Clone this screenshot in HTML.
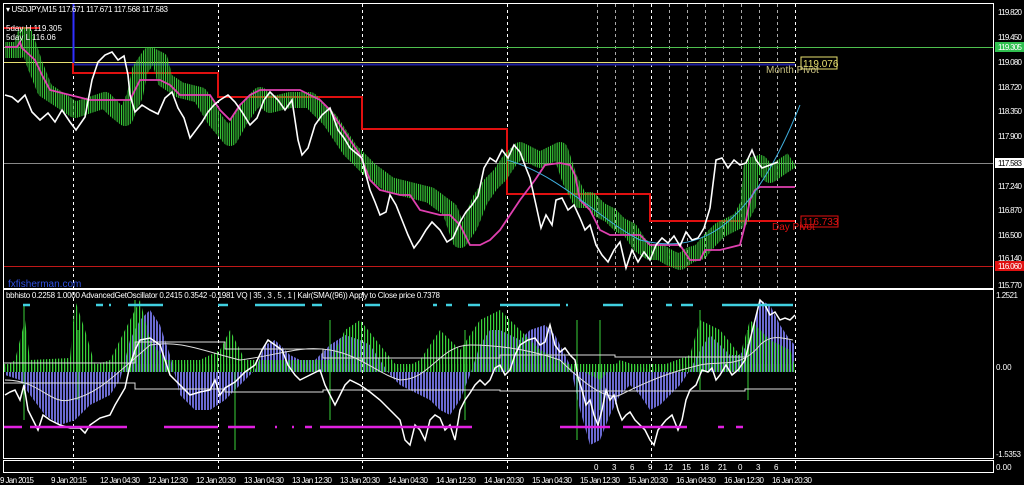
<!DOCTYPE html>
<html><head><meta charset="utf-8"><style>
html,body{margin:0;padding:0;background:#000;width:1024px;height:485px;overflow:hidden}
svg{display:block}
text{font-family:"Liberation Sans",sans-serif;font-size:8px;fill:#fff}
</style></head><body>
<svg width="1024" height="485" viewBox="0 0 1024 485">
<defs>
<pattern id="hb" width="3" height="4" patternUnits="userSpaceOnUse"><rect x="0" y="0" width="2" height="4" fill="#6a6ad0"/></pattern>
<pattern id="hg" width="3" height="4" patternUnits="userSpaceOnUse"><rect x="1" y="0" width="1.2" height="4" fill="#3ad23a"/></pattern>
<pattern id="vs" width="2.2" height="4" patternUnits="userSpaceOnUse"><rect x="0" y="0" width="1.1" height="4" fill="#fff"/></pattern>
<mask id="vm" maskUnits="userSpaceOnUse" x="0" y="0" width="1024" height="300"><rect x="0" y="0" width="1024" height="300" fill="url(#vs)"/></mask>
</defs>
<rect width="1024" height="485" fill="#000"/>
<rect x="3.5" y="3.5" width="990" height="285" fill="none" stroke="#fff"/>
<rect x="3.5" y="289.5" width="990" height="169" fill="none" stroke="#fff"/>
<rect x="3.5" y="460.5" width="990" height="12" fill="none" stroke="#fff"/>
<g stroke="#fff" stroke-dasharray="3,3" stroke-width="1">
<line x1="73.5" y1="4" x2="73.5" y2="472"/><line x1="218.5" y1="4" x2="218.5" y2="472"/>
<line x1="362.5" y1="4" x2="362.5" y2="472"/><line x1="507.5" y1="4" x2="507.5" y2="472"/>
<line x1="651.5" y1="4" x2="651.5" y2="472"/><line x1="795.5" y1="4" x2="795.5" y2="472"/>
</g>
<g stroke="#aaa" stroke-dasharray="3,3" stroke-width="1">
<line x1="597.5" y1="4" x2="597.5" y2="288"/><line x1="615.5" y1="4" x2="615.5" y2="288"/>
<line x1="633.5" y1="4" x2="633.5" y2="288"/><line x1="669.5" y1="4" x2="669.5" y2="288"/>
<line x1="687.5" y1="4" x2="687.5" y2="288"/><line x1="705.5" y1="4" x2="705.5" y2="288"/>
<line x1="723.5" y1="4" x2="723.5" y2="288"/><line x1="741.5" y1="4" x2="741.5" y2="288"/>
<line x1="759.5" y1="4" x2="759.5" y2="288"/><line x1="777.5" y1="4" x2="777.5" y2="288"/>
</g>
<line x1="4" y1="47.5" x2="993" y2="47.5" stroke="#4ec04e"/>
<line x1="4" y1="62.5" x2="795" y2="62.5" stroke="#e8e070"/>
<line x1="73" y1="64.5" x2="795" y2="64.5" stroke="#2020a0" stroke-width="2"/>
<line x1="4" y1="163.5" x2="993" y2="163.5" stroke="#888"/>
<line x1="4" y1="266.5" x2="993" y2="266.5" stroke="#c01818"/>
<line x1="73.5" y1="4" x2="73.5" y2="63" stroke="#3030ff" stroke-width="2"/>
<polyline fill="none" stroke="#e01010" stroke-width="2" points="4,28 40,28"/>
<polyline fill="none" stroke="#e01010" stroke-width="2" points="73,63 73,73 218,73 218,97 362,97 362,129 507,129 507,194 650,194 650,221 795,221"/>
<g mask="url(#vm)">
<polyline fill="none" stroke="#3ad23a" stroke-width="16" stroke-linejoin="round" points="5,50 20,50 25,35 35,65 45,90 60,100 75,110 90,105 105,100 115,110 125,118 135,95 140,70 150,55 160,60 165,80 180,90 200,95 215,120 230,138 240,120 250,105 260,95 270,105 290,100 310,100 330,120 350,150 370,170 390,185 410,190 430,195 450,210 460,240 470,225 480,200 490,185 500,175 510,160 520,150 540,160 560,150 570,180 580,200 590,200 600,210 610,215 620,225 630,230 640,245 650,252 660,252 670,258 680,262 690,255 700,252 710,240 720,230 730,225 740,220 748,205 752,165 760,163 770,175 780,168 792,160"/>
</g>
<polyline fill="none" stroke="#e040b0" stroke-width="1.8" points="5,47 17,47 20,42 22,48 35,60 42,75 50,90 70,95 90,100 110,100 130,100 140,80 160,80 170,85 180,95 210,95 220,110 230,120 240,105 250,95 260,90 280,90 300,90 310,95 320,100 330,110 340,125 350,140 360,155 370,180 380,190 400,195 410,195 420,210 440,215 450,215 460,225 470,245 480,245 490,240 500,230 510,215 520,200 535,180 545,165 560,163 570,165 575,175 580,200 590,210 600,230 610,235 620,235 640,235 650,245 660,245 680,245 690,260 700,260 705,250 720,250 740,245 745,225 750,200 755,190 760,187 795,187"/>
<path d="M507,160 C560,175 600,220 640,240 C700,255 750,230 800,105" fill="none" stroke="#40b0e0" stroke-width="1"/>
<polyline fill="none" stroke="#fff" stroke-width="1.6" points="5,95 12,97 18,102 25,95 32,112 40,120 48,113 55,122 62,110 70,122 76,130 85,117 92,80 98,62 105,55 112,52 118,60 124,56 128,75 130,95 135,112 142,105 150,110 158,114 165,98 172,92 178,108 184,118 190,138 196,130 202,122 208,112 214,105 220,100 228,95 235,102 242,112 250,125 257,118 264,100 270,92 278,100 285,110 292,100 298,140 302,155 308,148 315,125 322,115 330,108 338,130 344,138 350,148 356,153 362,158 366,175 370,190 375,202 380,215 386,212 390,195 396,205 402,220 408,235 414,248 420,240 426,230 432,222 440,230 447,242 453,238 460,222 466,212 472,205 478,196 484,168 490,158 496,162 502,150 508,158 514,145 520,152 526,168 530,178 536,205 541,228 546,215 552,225 556,200 562,198 568,210 574,205 580,218 585,230 590,225 596,245 602,255 608,262 614,250 620,242 626,268 632,250 638,262 644,252 650,260 656,245 662,238 668,243 674,236 680,246 686,232 692,240 698,238 704,228 710,208 716,160 722,158 728,168 734,160 740,165 746,163 752,150 756,160 762,168 770,165 778,162"/>
<rect x="801" y="57" width="36" height="12" fill="none" stroke="#e8e070"/>
<text x="803" y="67" style="fill:#e8e070;font-size:10px">119.076</text>
<text x="766" y="73" style="fill:#c8c080;font-size:10px">Month Pivot</text>
<rect x="801" y="216" width="37" height="11" fill="none" stroke="#e01010"/>
<text x="803" y="225" style="fill:#e01010;font-size:10px">116.733</text>
<text x="772" y="230" style="fill:#e01010;font-size:10px">Day Pivot</text>
<text x="6" y="12" textLength="162">▾ USDJPY,M15  117.671 117.671 117.568 117.583</text>
<text x="6" y="31">5day H 119.305</text>
<text x="6" y="40">5day L 116.06</text>
<text x="8" y="287" style="fill:#3050e0;font-size:10px">fxfisherman.com</text>
<path fill="url(#hb)" d="M5,367 L5,375 20,380 30,395 45,415 60,425 75,420 90,405 110,395 120,380 130,340 140,320 150,310 160,325 170,355 180,395 195,410 210,410 225,400 240,385 255,370 265,345 275,340 290,355 300,360 315,360 330,345 345,335 360,340 370,345 380,360 390,375 400,385 410,390 420,395 430,400 440,410 450,415 460,400 470,375 480,345 490,330 500,330 510,335 520,340 530,330 545,325 555,335 570,365 580,410 590,445 600,440 610,415 620,395 630,385 640,395 650,410 660,405 670,395 680,385 690,370 700,350 710,335 720,345 730,355 740,355 750,340 760,300 770,305 780,325 790,340 795,345 795,372 5,372Z"/>
<rect x="4" y="364" width="790" height="8" fill="url(#hg)"/>
<path fill="url(#hg)" d="M5,367 L15,360 25,320 30,360 70,358 75,300 85,330 95,365 110,360 130,320 140,300 150,340 165,360 200,360 220,350 230,330 245,360 330,360 345,330 360,320 400,370 420,360 440,330 460,350 480,320 500,310 520,330 540,350 560,360 600,380 620,360 650,370 690,355 700,320 720,330 740,355 750,320 760,330 770,340 790,350 795,367 795,372 5,372Z"/>
<g stroke="#3ad23a" stroke-width="1">
<line x1="24" y1="305" x2="24" y2="420"/><line x1="78" y1="330" x2="78" y2="400"/><line x1="135" y1="300" x2="135" y2="360"/><line x1="235" y1="372" x2="235" y2="450"/><line x1="330" y1="320" x2="330" y2="420"/><line x1="465" y1="330" x2="465" y2="420"/><line x1="577" y1="320" x2="577" y2="440"/><line x1="600" y1="320" x2="600" y2="410"/><line x1="700" y1="310" x2="700" y2="390"/><line x1="748" y1="330" x2="748" y2="400"/>
</g>
<polyline fill="none" stroke="#ddd" stroke-width="1" points="4,363 135,363 135,342 225,342 225,349 323,349 323,358 500,358 500,355 615,355 615,357 745,357"/>
<polyline fill="none" stroke="#ddd" stroke-width="1" points="4,383 135,383 135,389 225,389 225,392 323,392 323,390 500,390 500,391 745,391 745,389 793,389"/>
<path fill="none" stroke="#ddd" stroke-width="1" d="M5,380 C40,380 50,405 70,400 C95,395 110,380 150,345 C180,340 200,350 240,360 C280,355 300,345 330,350 C360,355 380,375 400,380 C430,380 440,345 470,345 C500,345 530,350 560,360 C590,390 610,400 620,395 C660,375 680,370 700,365 C720,360 740,370 760,345 C770,335 780,337 793,340"/>
<polyline fill="none" stroke="#fff" stroke-width="1.5" points="5,395 10,392 15,390 20,400 24,385 28,410 33,420 38,430 43,415 50,420 60,425 70,428 80,428 85,433 90,425 100,418 110,415 115,405 125,388 130,365 135,350 140,340 150,338 160,345 165,360 170,375 175,380 180,385 190,395 200,392 210,390 215,380 220,395 225,388 235,382 245,372 255,365 262,350 268,340 275,345 282,350 288,365 295,375 300,380 310,375 320,370 325,385 330,395 335,405 340,395 345,385 350,380 360,385 370,392 380,400 390,410 400,420 405,440 410,445 415,425 420,430 425,440 430,420 435,415 440,418 445,430 450,425 455,440 460,410 465,400 470,393 475,385 480,380 485,385 490,380 495,368 500,365 505,375 510,370 515,355 520,345 528,340 535,338 540,345 545,342 550,325 555,345 560,352 565,348 570,355 575,360 578,378 582,390 586,405 590,400 594,415 598,425 602,410 606,390 610,400 614,395 618,410 622,420 626,415 630,412 635,420 640,425 645,430 650,440 654,445 658,430 662,425 666,420 672,415 678,430 682,420 686,400 690,390 696,385 702,370 708,372 712,368 716,380 720,375 726,365 732,375 738,370 745,360 750,340 755,320 760,300 765,305 770,315 775,312 780,320 785,318 790,320 795,315"/>
<g stroke="#40d0e0" stroke-width="2.5">
<line x1="23" y1="305" x2="30" y2="305"/><line x1="96" y1="305" x2="103" y2="305"/><line x1="109" y1="305" x2="111" y2="305"/><line x1="128" y1="305" x2="163" y2="305"/><line x1="218" y1="305" x2="228" y2="305"/><line x1="255" y1="305" x2="305" y2="305"/><line x1="312" y1="305" x2="322" y2="305"/><line x1="365" y1="305" x2="380" y2="305"/><line x1="433" y1="305" x2="437" y2="305"/><line x1="446" y1="305" x2="452" y2="305"/><line x1="468" y1="305" x2="480" y2="305"/><line x1="500" y1="305" x2="560" y2="305"/><line x1="566" y1="305" x2="568" y2="305"/><line x1="603" y1="305" x2="623" y2="305"/><line x1="666" y1="305" x2="672" y2="305"/><line x1="681" y1="305" x2="693" y2="305"/><line x1="722" y1="305" x2="793" y2="305"/>
</g>
<g stroke="#e020e0" stroke-width="2.5">
<line x1="4" y1="427" x2="22" y2="427"/><line x1="30" y1="427" x2="127" y2="427"/><line x1="164" y1="427" x2="218" y2="427"/><line x1="228" y1="427" x2="255" y2="427"/><line x1="275" y1="427" x2="277" y2="427"/><line x1="292" y1="427" x2="294" y2="427"/><line x1="305" y1="427" x2="312" y2="427"/><line x1="320" y1="427" x2="472" y2="427"/><line x1="560" y1="427" x2="610" y2="427"/><line x1="623" y1="427" x2="687" y2="427"/><line x1="718" y1="427" x2="724" y2="427"/><line x1="736" y1="427" x2="743" y2="427"/>
</g>
<text x="6" y="298" textLength="434">bbhisto 0.2258 1.0000  AdvancedGetOscillator 0.2415 0.3542 -0.1981  VQ |  35 , 3 , 5 , 1  |   Kalr(SMA((96)) Apply to Close price 0.7378</text>
<g style="font-size:9px">
<text x="594" y="470">0</text><text x="612" y="470">3</text><text x="630" y="470">6</text><text x="648" y="470">9</text><text x="664" y="470">12</text><text x="682" y="470">15</text><text x="700" y="470">18</text><text x="718" y="470">21</text><text x="738" y="470">0</text><text x="756" y="470">3</text><text x="774" y="470">6</text>
</g>
<g style="font-size:8px">
<text x="0" y="483" textLength="34">9 Jan 2015</text><text x="51" y="483" textLength="36">9 Jan 20:15</text><text x="100" y="483" textLength="40">12 Jan 04:30</text><text x="148" y="483" textLength="40">12 Jan 12:30</text><text x="196" y="483" textLength="40">12 Jan 20:30</text><text x="244" y="483" textLength="40">13 Jan 04:30</text><text x="292" y="483" textLength="40">13 Jan 12:30</text><text x="340" y="483" textLength="40">13 Jan 20:30</text><text x="388" y="483" textLength="40">14 Jan 04:30</text><text x="436" y="483" textLength="40">14 Jan 12:30</text><text x="484" y="483" textLength="40">14 Jan 20:30</text><text x="532" y="483" textLength="40">15 Jan 04:30</text><text x="580" y="483" textLength="40">15 Jan 12:30</text><text x="628" y="483" textLength="40">15 Jan 20:30</text><text x="676" y="483" textLength="40">16 Jan 04:30</text><text x="724" y="483" textLength="40">16 Jan 12:30</text><text x="772" y="483" textLength="40">16 Jan 20:30</text>
</g>
<g style="font-size:8px">
<text x="998" y="15" textLength="24">119.820</text><text x="998" y="40" textLength="24">119.450</text>
<rect x="995" y="42" width="29" height="10" fill="#30c050"/><text x="998" y="50" textLength="24">119.305</text>
<text x="998" y="65" textLength="24">119.080</text><text x="998" y="90" textLength="24">118.720</text><text x="998" y="114" textLength="24">118.350</text><text x="998" y="139" textLength="24">117.900</text>
<rect x="995" y="158" width="29" height="10" fill="#fff"/><text x="998" y="166" textLength="24" style="fill:#000">117.583</text>
<text x="998" y="189" textLength="24">117.240</text><text x="998" y="213" textLength="24">116.870</text><text x="998" y="238" textLength="24">116.500</text><text x="998" y="261" textLength="24">116.140</text>
<rect x="995" y="261" width="29" height="10" fill="#e01010"/><text x="998" y="269" textLength="24">116.060</text>
<text x="998" y="288" textLength="24">115.770</text>
<text x="996" y="298" textLength="22">1.2521</text><text x="996" y="370">0.00</text><text x="996" y="457" textLength="25">-1.5353</text><text x="996" y="470">0.00</text>
</g>
</svg>
</body></html>
